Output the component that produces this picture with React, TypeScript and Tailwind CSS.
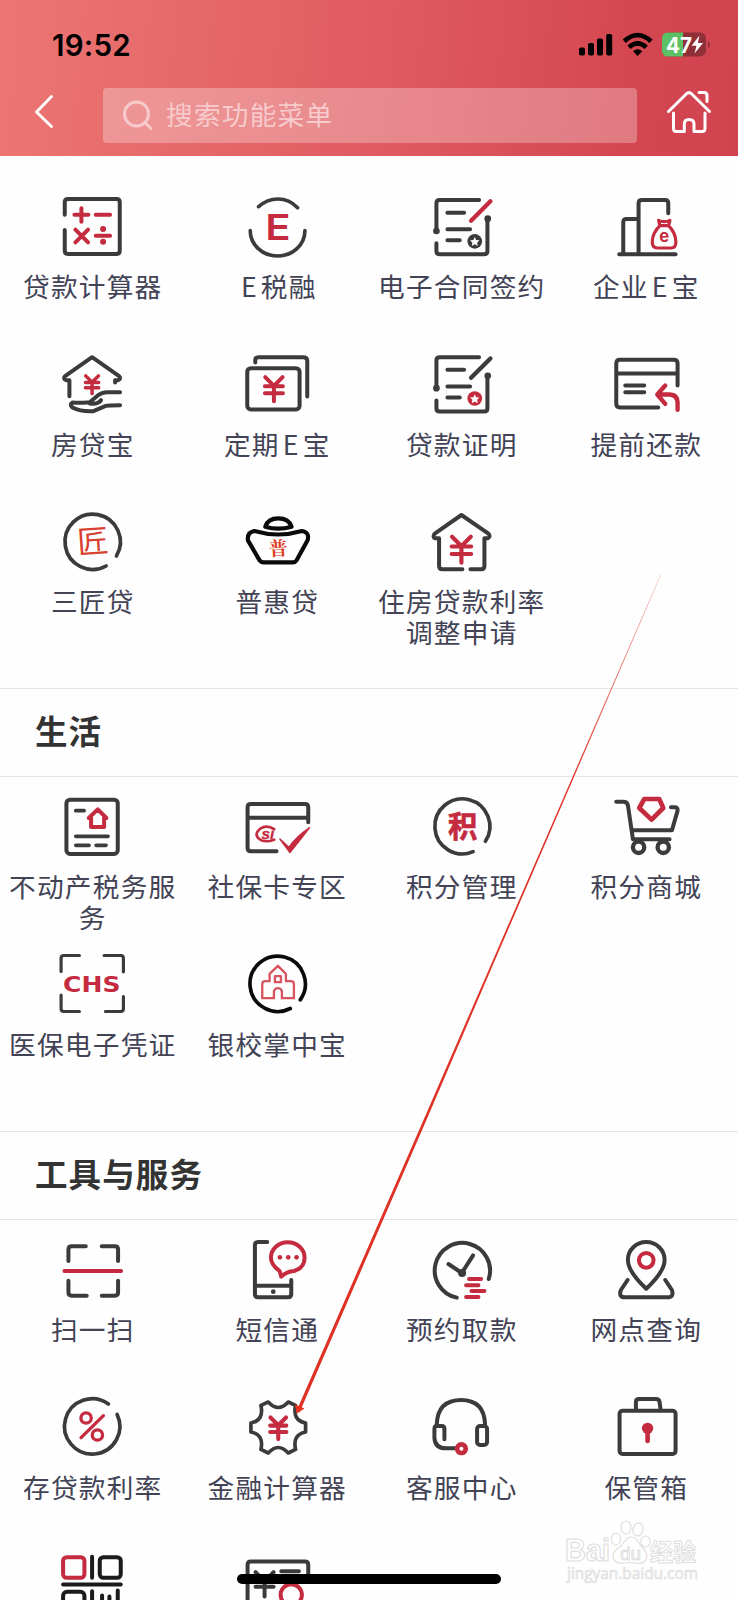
import type { ReactNode } from 'react';

const INK = '#3b3b3b';
const RED = '#c42b3f';
const CJK = '"Noto Sans CJK SC", "Noto Sans", sans-serif';

type IconProps = { box: string; children: ReactNode };

function Icon({ box, children }: IconProps) {
  return (
    <svg
      viewBox={box}
      className="block h-[60px] w-[72px] shrink-0 overflow-visible"
      fill="none"
      stroke={INK}
      strokeWidth={12}
      strokeLinecap="round"
      strokeLinejoin="round"
    >
      {children}
    </svg>
  );
}

function Yen({ x, y, s = 1, w = 12 }: { x: number; y: number; s?: number; w?: number }) {
  return (
    <g transform={`translate(${x} ${y}) scale(${s})`} stroke={RED} strokeWidth={w}>
      <path d="M-26 -35 L0 -9 L26 -35 M0 -11 V37 M-27 -8 H27 M-27 13 H27" />
    </g>
  );
}

const LoanCalc = () => (
  <Icon box="168.75 51 216 180">
    <path d="M195 104 V67 Q195 57 205 57 H350 Q360 57 360 67 V212 Q360 222 350 222 H205 Q195 222 195 212 V150" />
    <g stroke={RED}>
      <path d="M224 104 H266 M245 85 V125 M288 104 H331 M227 149 L265 187 M265 149 L227 187 M288 167 H331" />
      <circle cx="310" cy="147" r="9" fill={RED} stroke="none" />
      <circle cx="310" cy="185" r="9" fill={RED} stroke="none" />
    </g>
  </Icon>
);

const TaxE = () => (
  <Icon box="722.25 51 216 180">
    <path d="M775 80 Q801 57 833 57 Q867 57 892 83 M750 152 A82 76 0 0 0 914 152" strokeWidth={11} />
    <text x="795" y="179" fontSize="107" fontWeight="600" fontFamily="Inter, sans-serif" fill={RED} stroke="none" textLength="76" lengthAdjust="spacingAndGlyphs">E</text>
  </Icon>
);

function Contract({ box, dy, pen, seal }: { box: string; dy: number; pen: string; seal: string }) {
  return (
    <Icon box={box}>
      <g transform={`translate(0 ${dy})`}>
        <path d="M334 60 H216 Q206 60 206 70 V153 M206 190 V213 Q206 223 216 223 H349 Q359 223 359 213 V116" />
        <path d="M239 98 H289 M239 148 H307 M239 181 H276" />
        <circle cx="206" cy="153" r="10" fill={INK} stroke="none" />
        <circle cx="360" cy="116" r="10" fill={INK} stroke="none" />
        <path d="M310 122 L368 64" stroke={pen} strokeWidth={13} />
        <circle cx="321" cy="184" r="22" fill={seal} stroke="none" />
        <path d="M321 171 L325 180 L335 181 L328 188 L330 198 L321 193 L312 198 L314 188 L307 181 L317 180 Z" fill="#fff" stroke="none" />
      </g>
    </Icon>
  );
}

const Enterprise = () => (
  <Icon box="725.25 51 216 180">
    <path d="M753 223 H922 M765 223 V127 Q765 117 775 117 H808 M811 223 V70 Q811 60 821 60 H890 Q900 60 900 70 V100" />
    <g stroke={RED} strokeWidth={9.5}>
      <path d="M871 121 Q888 129 905 121 L901 137 Q923 160 923 186 Q923 204 908 204 H868 Q852 204 852 186 Q852 160 875 137 Z M875 137 H901" />
    </g>
    <text x="888" y="187" fontSize="50" fontWeight="700" fontFamily="Inter, sans-serif" fill={RED} stroke="none" textAnchor="middle">e</text>
  </Icon>
);

const HouseHand = () => (
  <Icon box="168.75 523.5 216 180">
    <path d="M209 650 V602 H199 Q189 598 196 590 L277 533 L358 590 Q365 598 355 602 H346 V609" />
    <path d="M361 638 H322 Q306 638 294 648 L270 668 Q240 671 218 669 Q208 674 218 684 Q243 697 281 695 L318 679 Q326 677 361 677 M270 672 Q296 675 304 662" />
    <Yen x={277} y={615} s={0.74} w={14} />
  </Icon>
);

const FixedDeposit = () => (
  <Icon box="722.25 523.5 216 180">
    <rect x="741" y="566" width="157" height="124" rx="11" />
    <path d="M765 549 V543 Q765 533 775 533 H909 Q921 533 921 544 V651" />
    <Yen x={821} y={628} />
  </Icon>
);

const Prepay = () => (
  <Icon box="725.25 523.5 216 180">
    <path d="M928 618 V552 Q928 541 917 541 H755 Q744 541 744 552 V673 Q744 684 755 684 H870 M744 582 H928 M771 618 H828 M771 638 H828" />
    <path d="M891 618 L867 645 L891 673 M870 645 H903 Q928 645 928 672 V691" stroke={RED} strokeWidth={13} />
  </Icon>
);

const Craftsman = () => (
  <Icon box="168.75 96 216 180">
    <path d="M350 228 A83 83 0 1 0 319 258" strokeWidth={11} />
    <text x="279" y="218" fontSize="94" fontWeight="400" fontFamily={CJK} fill="#d9402f" stroke="none" textAnchor="middle" transform="rotate(-4 279 184)">匠</text>
  </Icon>
);

const Ingot = () => (
  <Icon box="722.25 96 216 180">
    <g stroke="#0a0a0a" strokeWidth={12.5}>
      <path d="M795 140 Q803 115 834 115 Q866 115 874 140 Q834 152 795 140 Z" />
      <path d="M762 153 Q833 174 905 153 Q929 157 922 181 L889 241 Q885 247 878 247 H790 Q783 247 778 241 L743 181 Q740 157 762 153 Z" />
    </g>
    <text x="834" y="226" fontSize="58" fontWeight="700" fontFamily='"Noto Serif CJK SC", "Noto Sans CJK SC", serif' fill="#e03a22" stroke="none" textAnchor="middle" transform="rotate(-4 834 204)">普</text>
  </Icon>
);

const HouseRate = () => (
  <Icon box="171.75 96 216 180">
    <path d="M284 268 H224 Q214 268 214 258 V175 H202 Q193 170 201 161 L281 105 L362 161 Q370 170 360 175 H350 V258 Q350 268 340 268 H308" />
    <Yen x={281} y={208} s={1.08} w={11.5} />
  </Icon>
);

const Property = () => (
  <Icon box="168.75 51 216 180">
    <rect x="200" y="59" width="154" height="163" rx="11" />
    <path d="M228 92 H253 M228 169 H325 M228 196 H268 M289 196 H319" strokeWidth={11} />
    <path d="M294 88 L320 114 H313 V141 H274 V114 H267 Z" stroke={RED} />
  </Icon>
);

const SocialCard = () => (
  <Icon box="722.25 51 216 180">
    <path d="M924 127 V82 Q924 72 914 72 H752 Q742 72 742 82 V204 Q742 214 752 214 H829 M742 113 H924" />
    <path d="M839 177 L866 202 Q888 170 928 143 Q900 180 869 218 Z" fill={RED} stroke={RED} strokeWidth={4} />
    <path d="M822 148 Q800 133 780 146 Q760 162 776 176 Q792 190 822 179" stroke={RED} strokeWidth={8} />
    <text x="803" y="178" fontSize="46" fontStyle="italic" fontWeight="700" fontFamily='"Liberation Sans", sans-serif' fill={RED} stroke={RED} strokeWidth={1} textAnchor="middle">si</text>
  </Icon>
);

const Points = () => (
  <Icon box="171.75 51 216 180">
    <path d="M353 184 A82.500 82.500 0 1 0 316 215" strokeWidth={11} />
    <text x="285" y="170" fontSize="88" fontWeight="700" fontFamily={CJK} fill={RED} stroke={RED} strokeWidth={2} textAnchor="middle">积</text>
  </Icon>
);

const Cart = () => (
  <Icon box="725.25 51 216 180">
    <path d="M744 65 H765 Q777 65 779 76 L794 178 H904 M794 151 H911 L928 92 Q929 82 919 82 H908" />
    <circle cx="811" cy="202" r="17" strokeWidth={13} />
    <circle cx="885" cy="202" r="17" strokeWidth={13} />
    <path d="M828 57 H873 L885 84 L850 119 L813 84 Z" stroke={RED} strokeWidth={14} />
  </Icon>
);

const Chs = () => (
  <Icon box="168.75 523.5 216 180">
    <path d="M184 576 V536 Q184 528 192 528 H239 M313 528 H363 Q371 528 371 536 V577 M184 647 V688 Q184 696 192 696 H239 M317 696 H363 Q371 696 371 688 V651" strokeWidth={9.5} />
    <text x="190" y="638" fontSize="66" fontWeight="700" fontFamily='"DejaVu Sans", sans-serif' fill={RED} stroke="none" textLength="172" lengthAdjust="spacingAndGlyphs">CHS</text>
  </Icon>
);

const School = () => (
  <Icon box="722.25 523.5 216 180">
    <path d="M900 661 A83 83 0 1 0 870 687" stroke="#0a0a0a" strokeWidth={11} />
    <g stroke="#d85560" strokeWidth={7}>
      <path d="M833 559 L857 583 V605 H872 Q881 605 881 614 V656 H845 V635 Q842 626 833 626 Q824 626 821 635 V656 H786 V614 Q786 605 795 605 H808 V583 Z" />
      <rect x="824" y="590" width="18" height="18" />
    </g>
  </Icon>
);

const Scan = () => (
  <Icon box="168.75 357 216 180">
    <path d="M206 420 V386 Q206 376 216 376 H258 M306 376 H345 Q355 376 355 386 V420 M206 479 V514 Q206 524 216 524 H261 M306 524 H345 Q355 524 355 514 V479" />
    <path d="M194 450 H364" stroke={RED} />
  </Icon>
);

const Sms = () => (
  <Icon box="722.25 357 216 180">
    <path d="M801 363 H774 Q764 363 764 373 V519 Q764 529 774 529 H863 Q873 529 873 519 V477 M764 494 H873" />
    <circle cx="819" cy="512" r="7" fill={INK} stroke="none" />
    <path d="M843 467 L838 450 Q812 430 812 410 A50 46 0 0 1 913 410 Q913 440 882 450 Q859 451 843 467 Z" stroke={RED} />
    <g fill={RED} stroke="none">
      <circle cx="839" cy="409" r="7" />
      <circle cx="864" cy="409" r="7" />
      <circle cx="889" cy="409" r="7" />
    </g>
  </Icon>
);

const Withdraw = () => (
  <Icon box="171.75 357 216 180">
    <path d="M363 474 A83 83 0 1 0 267 530 M242 429 L282 456 L316 403" />
    <circle cx="283" cy="456" r="12" fill={INK} stroke="none" />
    <path d="M304 474 H340 M295 493 H332 M311 510 H350 M295 528 H332" stroke={RED} />
  </Icon>
);

const Branch = () => (
  <Icon box="725.25 357 216 180">
    <path d="M834 503 Q779 452 779 416 A55 53 0 0 1 889 416 Q889 452 834 503 Z M778 477 L758 507 Q750 529 770 529 H898 Q918 529 911 507 L891 477" />
    <circle cx="834" cy="418" r="22" stroke={RED} />
  </Icon>
);

const Rates = () => (
  <Icon box="168.75 51 216 180">
    <path d="M352 103 A83 83 0 1 1 326 72" strokeWidth={11} />
    <g stroke={RED} strokeWidth={10}>
      <circle cx="259" cy="114" r="15.500" />
      <circle cx="293" cy="165" r="15.500" />
      <path d="M311 107 L244 173" />
    </g>
  </Icon>
);

const FinanceGear = () => (
  <Icon box="722.25 51 216 180">
    <path d="M804 66 Q834 99 864 66 L886 76 Q876 121 916 129 V156 Q876 164 886 208 L864 219 Q834 186 804 219 L782 208 Q792 164 752 156 V129 Q792 121 782 76 Z" strokeWidth={11} />
    <Yen x={834} y={144} s={0.9} w={13.5} />
  </Icon>
);

const Headset = () => (
  <Icon box="171.75 51 216 180">
    <path d="M207 133 Q210 60 280 60 Q349 60 352 133 M230 178 V146 Q230 138 222 138 H206 Q200 138 200 148 V174 Q202 205 235 205 H264" />
    <rect x="328" y="138" width="30" height="57" rx="9" />
    <circle cx="281" cy="206" r="13" stroke={RED} strokeWidth={14} />
  </Icon>
);

const Safe = () => (
  <Icon box="725.25 51 216 180">
    <rect x="754" y="92" width="168" height="130" rx="9" />
    <path d="M803 89 V66 Q803 57 813 57 H863 Q873 57 874 66 L877 89" />
    <circle cx="838" cy="145" r="17" fill={RED} stroke="none" />
    <path d="M838 148 V183" stroke={RED} strokeWidth={14} />
  </Icon>
);

const QrCode = () => (
  <Icon box="168.75 523.5 216 180">
    <g stroke="#1c1a1a" strokeWidth={12}>
      <rect x="190" y="530" width="64" height="62" rx="11" stroke={RED} />
      <rect x="300" y="530" width="63" height="62" rx="11" />
      <path d="M277 529 V592 M190 612 H363 M307 645 V700 M329 648 V700 M354 630 V700" />
      <rect x="190" y="634" width="64" height="62" rx="12" />
      <path d="M277 632 V700" />
    </g>
  </Icon>
);

const Bill = () => (
  <Icon box="722.25 523.5 216 180">
    <path d="M742 700 V553 Q742 543 752 543 H914 Q924 543 924 553 V600" />
    <path d="M766 575 L793 604 L820 575 M793 604 V648 M766 602 H820 M766 619 H820 M843 572 H896" />
    <circle cx="873" cy="643" r="32" stroke={RED} />
  </Icon>
);

type Entry = { label: ReactNode; icon: ReactNode };

const Latin = ({ children }: { children: string }) => <span className="px-[3px]">{children}</span>;

const finance: Entry[] = [
  { label: '贷款计算器', icon: <LoanCalc /> },
  { label: <><Latin>E</Latin>税融</>, icon: <TaxE /> },
  { label: '电子合同签约', icon: <Contract box="171.75 51 216 180" dy={0} pen={RED} seal={INK} /> },
  { label: <>企业<Latin>E</Latin>宝</>, icon: <Enterprise /> },
  { label: '房贷宝', icon: <HouseHand /> },
  { label: <>定期<Latin>E</Latin>宝</>, icon: <FixedDeposit /> },
  { label: '贷款证明', icon: <Contract box="171.75 523.5 216 180" dy={473} pen={INK} seal={RED} /> },
  { label: '提前还款', icon: <Prepay /> },
  { label: '三匠贷', icon: <Craftsman /> },
  { label: '普惠贷', icon: <Ingot /> },
  { label: '住房贷款利率调整申请', icon: <HouseRate /> },
];

const life: Entry[] = [
  { label: '不动产税务服务', icon: <Property /> },
  { label: '社保卡专区', icon: <SocialCard /> },
  { label: '积分管理', icon: <Points /> },
  { label: '积分商城', icon: <Cart /> },
  { label: '医保电子凭证', icon: <Chs /> },
  { label: '银校掌中宝', icon: <School /> },
];

const tools: Entry[] = [
  { label: '扫一扫', icon: <Scan /> },
  { label: '短信通', icon: <Sms /> },
  { label: '预约取款', icon: <Withdraw /> },
  { label: '网点查询', icon: <Branch /> },
  { label: '存贷款利率', icon: <Rates /> },
  { label: '金融计算器', icon: <FinanceGear /> },
  { label: '客服中心', icon: <Headset /> },
  { label: '保管箱', icon: <Safe /> },
  { label: '', icon: <QrCode /> },
  { label: '', icon: <Bill /> },
];

function Grid({ entries }: { entries: Entry[] }) {
  return (
    <div className="grid auto-rows-[157.5px] grid-cols-4">
      {entries.map((e, i) => (
        <div key={i} className="flex flex-col items-center pt-[19.5px]">
          {e.icon}
          <span className="mt-[13.5px] w-[174px] pl-px text-center text-[26.7px] leading-[31.4px] tracking-[1.2px] text-[#434356]">
            {e.label}
          </span>
        </div>
      ))}
    </div>
  );
}

function Title({ children }: { children: string }) {
  return (
    <h2 className="flex h-[89px] items-center border-y border-[#e6e6e6] pb-[5px] pl-[35px] text-[32.5px] font-bold tracking-[1.1px] text-[#333]">
      {children}
    </h2>
  );
}

function Header() {
  return (
    <header className="h-[156px] bg-linear-[95deg,#ec7673_0%,#df5b61_52%,#d44751_85%,#d1434f_100%] pt-[25px]">
      <div className="flex h-10 items-center pl-[52px]">
        <span className="font-[Inter] text-[29.5px] font-semibold tracking-[0.25px] text-black">19:52</span>
        <svg viewBox="0 0 132 26" className="ml-auto mr-[28px] block h-[26px] w-[132px]">
          <rect x="1" y="15.500" width="6" height="8" rx="1.800" />
          <rect x="10" y="11" width="6" height="12.500" rx="1.800" />
          <rect x="19" y="6.500" width="6" height="17" rx="1.800" />
          <rect x="28.200" y="2" width="6" height="21.500" rx="1.800" />
          <g fill="none" stroke="#000" strokeWidth="4.600">
            <path d="M46.300 9.300 Q59.500 -3 73 9.300" />
            <path d="M51 15.200 Q59.500 7.500 68.300 15.200" />
          </g>
          <path d="M55 19.200 Q59.500 15.500 64.300 19.200 L59.600 24 Z" />
          <rect x="84" y="0.500" width="44" height="24" rx="6" fill="#8f2f37" />
          <path d="M105 0.500 H90 Q84 0.500 84 6.500 V18.500 Q84 24.500 90 24.500 H105 Z" fill="#5cc165" />
          <path d="M130 9 Q132 10 132 12.500 Q132 15 130 16 Z" fill="#8f2f37" />
          <text x="88" y="20.500" fontSize="21.500" fontWeight="700" fontFamily="Inter, sans-serif" fill="#fff" textLength="26" lengthAdjust="spacingAndGlyphs">47</text>
          <path d="M121.500 3.500 L113.500 13.800 H118.500 L116.500 21.500 L125 11 H119.800 Z" fill="#fff" />
        </svg>
      </div>
      <div className="flex items-start pt-[23px]">
        <svg viewBox="0 0 20 36" className="ml-[34px] mt-[6px] block h-9 w-5" fill="none" stroke="#fff" strokeWidth="2.900" strokeLinecap="round" strokeLinejoin="round">
          <path d="M17.500 2.500 L2.500 18 L17.500 32.500" />
        </svg>
        <div className="ml-[49px] flex h-[55px] w-[534px] items-center rounded bg-white/28 pl-[19px] text-[#f7cbcc]">
          <svg viewBox="0 0 32 32" className="block h-8 w-8" fill="none" stroke="currentColor" strokeWidth="3" strokeLinecap="round">
            <circle cx="14.500" cy="14" r="12" />
            <path d="M23 22.500 L29 28.500" />
          </svg>
          <span className="ml-[12px] pb-[3px] text-[26.700px] tracking-[1.2px]">搜索功能菜单</span>
        </div>
        <svg viewBox="0 0 46 46" className="ml-[29px] mt-px block h-[46px] w-[46px]" fill="none" stroke="#fff" strokeWidth="3" strokeLinecap="round" strokeLinejoin="round">
          <path d="M2.500 22.500 L20.500 4.700 Q23 2.500 25.500 4.700 L43.500 22.500 M33 3.500 H38 Q41 3.500 41 6.500 V12.500" />
          <path d="M7.500 24 V39.500 Q7.500 42.500 10.500 42.500 H18.300 V35 Q18.300 30.500 23 30.500 Q28 30.500 28 35 V42.500 H36 Q39 42.500 39 39.500 V24" />
        </svg>
      </div>
    </header>
  );
}

function Watermark() {
  return (
    <svg viewBox="0 0 140 66" className="absolute left-[563px] top-[1518px] h-[66px] w-[140px]" fill="#fff" stroke="#dedede" strokeWidth="1.200">
      <text x="2" y="43" fontSize="31" fontWeight="700" fontFamily='"Liberation Sans", sans-serif' textLength="45" lengthAdjust="spacingAndGlyphs">Bai</text>
      <ellipse cx="53" cy="21" rx="4.600" ry="6" />
      <ellipse cx="63" cy="9.500" rx="5" ry="6.500" />
      <ellipse cx="75" cy="11.500" rx="5" ry="6.500" transform="rotate(12 75 11.500)" />
      <ellipse cx="82.500" cy="23.500" rx="4.600" ry="5.500" />
      <path d="M50 38 Q50 33 58 28 Q64 19 68.500 19 Q73 19 78 28 Q84 34 84 39 Q82 47 73 45 Q67 44 61 45 Q51 46 50 38 Z" />
      <text x="57" y="42" fontSize="19" fontFamily='"Liberation Sans", sans-serif' strokeWidth="1" textLength="21" lengthAdjust="spacingAndGlyphs">du</text>
      <text x="87" y="43" fontSize="24" fontWeight="700" fontFamily={CJK} strokeWidth="1" textLength="46" lengthAdjust="spacingAndGlyphs">经验</text>
      <text x="4" y="61" fontSize="17" fontFamily='"Open Sans", sans-serif' fill="#f2f2f2" strokeWidth="0.700" textLength="131" lengthAdjust="spacingAndGlyphs">jingyan.baidu.com</text>
    </svg>
  );
}

function Pointer() {
  return (
    <svg viewBox="0 0 738 1600" className="pointer-events-none absolute inset-0 h-[1600px] w-[738px]">
      <defs>
        <linearGradient id="fade" x1="661" y1="575" x2="572" y2="780" gradientUnits="userSpaceOnUse">
          <stop offset="0" stopColor="#de3226" stopOpacity="0.3" />
          <stop offset="1" stopColor="#de3226" />
        </linearGradient>
      </defs>
      <path d="M660.300 575 L571.200 780 L493 960 L423.500 1120 L296.500 1411 L299.500 1412.500 L426 1121 L494.800 960.500 L572.700 780 L661 575 Z" fill="url(#fade)" />
      <path d="M295 1404.500 L296.700 1413.500 L304.500 1408.500 Z" fill="#e8301f" />
    </svg>
  );
}

export default function App() {
  return (
    <div className="relative h-[1600px] w-[738px] overflow-hidden bg-[#fefefe] font-['Noto_Sans_CJK_SC',sans-serif]" lang="zh-CN">
      <Header />
      <section className="h-[532px] pt-[21px]">
        <Grid entries={finance} />
      </section>
      <section className="h-[443px]">
        <Title>生活</Title>
        <Grid entries={life} />
      </section>
      <section>
        <Title>工具与服务</Title>
        <Grid entries={tools} />
      </section>
      <Watermark />
      <Pointer />
      <div className="absolute left-[237px] top-[1574px] h-[10px] w-[264px] rounded-full bg-black" />
    </div>
  );
}
